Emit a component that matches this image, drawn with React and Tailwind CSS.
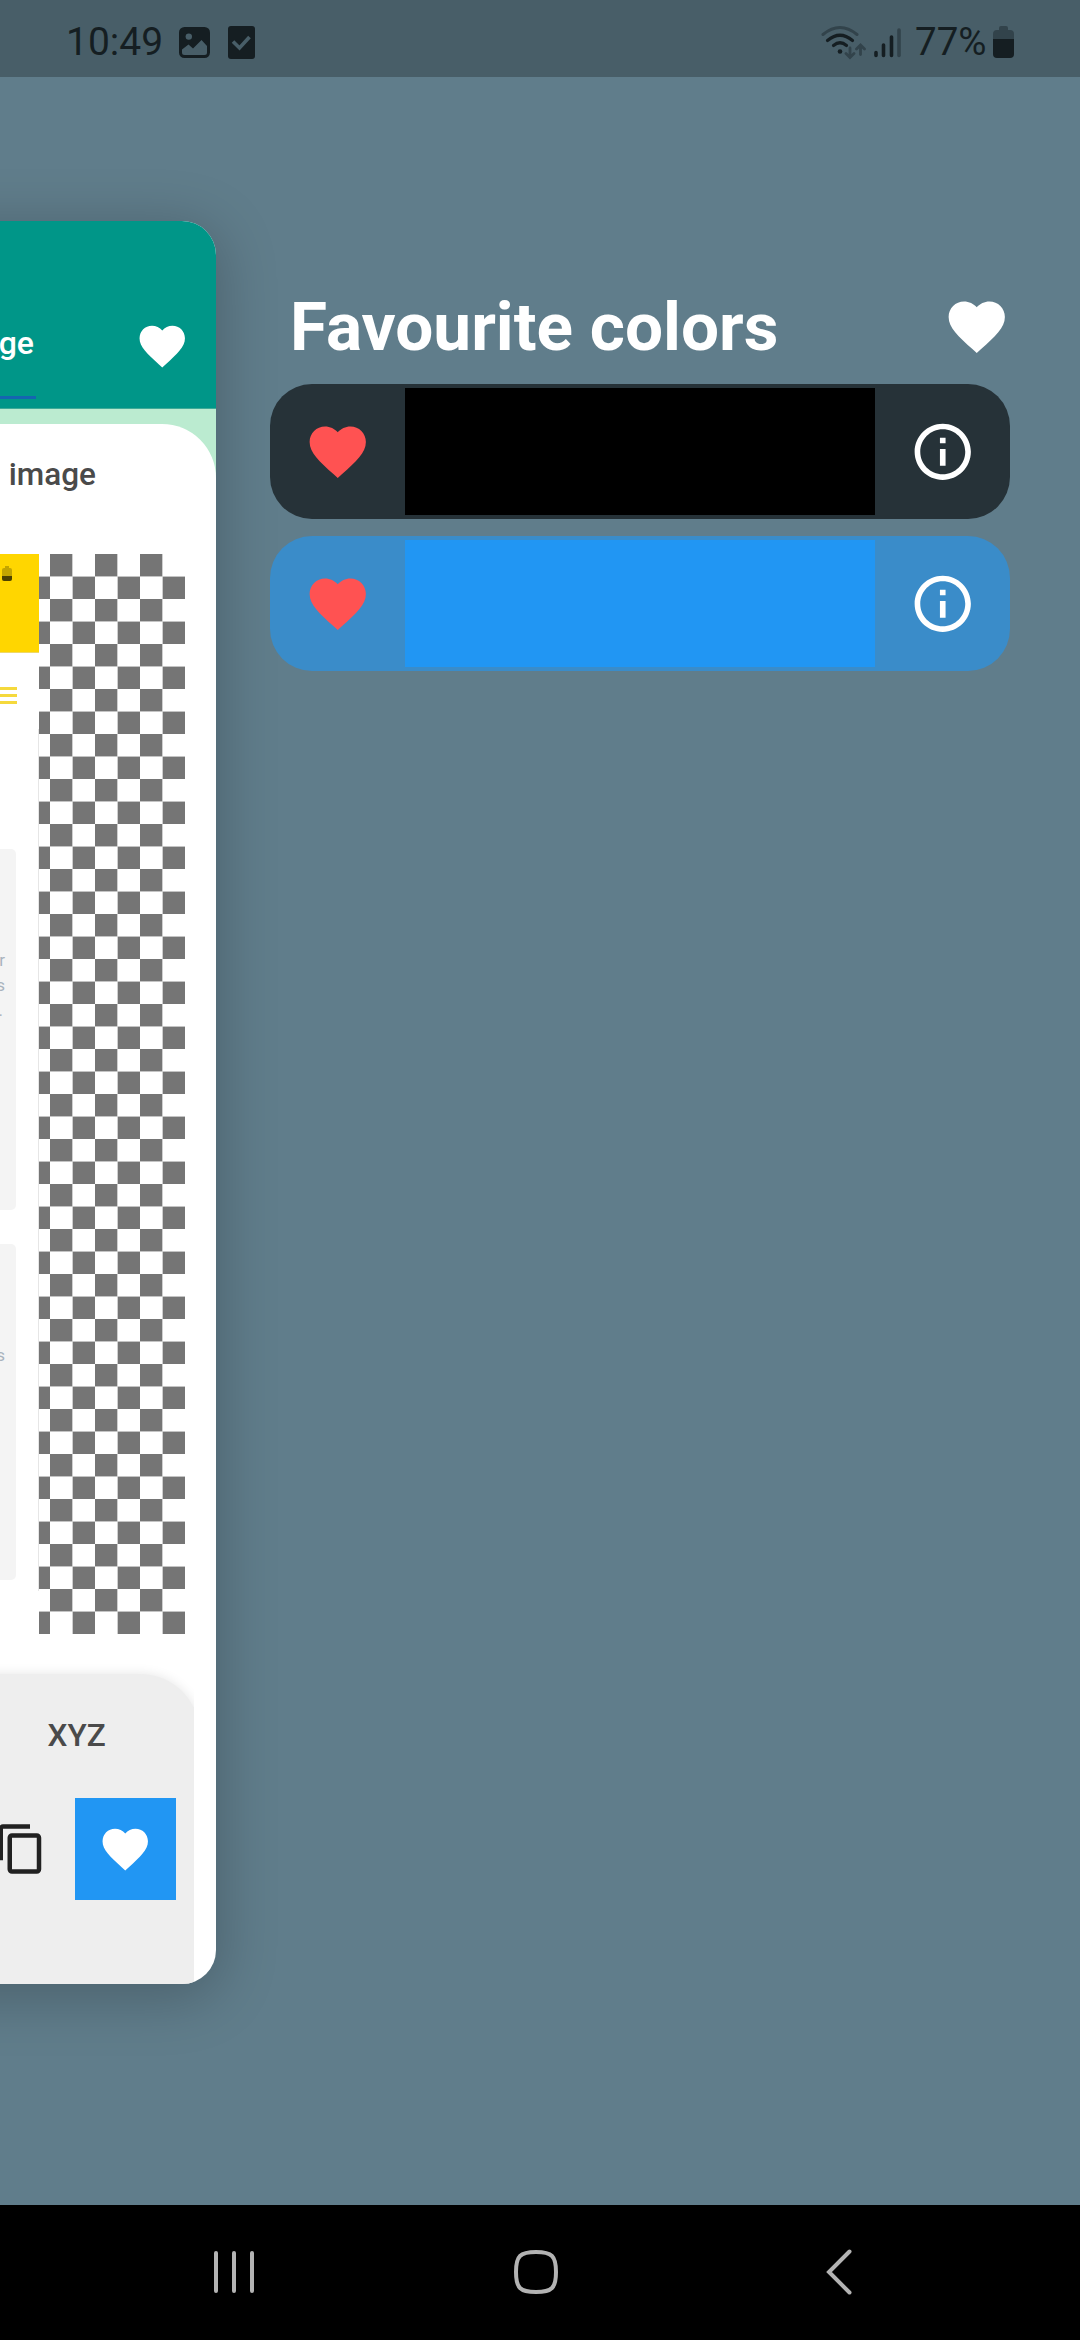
import React from "react";

const HEART =
  "M12 21.35l-1.45-1.32C5.4 15.36 2 12.28 2 8.5 2 5.42 4.42 3 7.5 3c1.74 0 3.41.81 4.5 2.09C13.09 3.81 14.76 3 16.5 3 19.58 3 22 5.42 22 8.5c0 3.78-3.4 6.86-8.55 11.54L12 21.35z";
const INFO =
  "M11 7h2v2h-2zm0 4h2v6h-2zm1-9C6.48 2 2 6.48 2 12s4.48 10 10 10 10-4.48 10-10S17.52 2 12 2zm0 18c-4.41 0-8-3.59-8-8s3.59-8 8-8 8 3.59 8 8-3.59 8-8 8z";
const COPY =
  "M16 1H4c-1.1 0-2 .9-2 2v14h2V3h12V1zm3 4H8c-1.1 0-2 .9-2 2v14c0 1.1.9 2 2 2h11c1.1 0 2-.9 2-2V7c0-1.1-.9-2-2-2zm0 16H8V7h11v14z";

function Icon({ d, className }) {
  return (
    <svg viewBox="0 0 24 24" fill="currentColor" className={"shrink-0 " + className}>
      <path d={d} />
    </svg>
  );
}

function StatusBar() {
  return (
    <header className="flex h-[77px] shrink-0 items-start bg-[#485e68] text-[#151e22]">
      <span className="ml-[66px] mt-[19px] w-[113px] text-[39px] leading-[46px]">10:49</span>
      <svg className="mt-[27px] h-[31px] w-[31px]" viewBox="0 0 31 31">
        <rect width="31" height="31" rx="5.5" fill="currentColor" />
        <circle cx="9.8" cy="9.6" r="3.2" fill="#485e68" />
        <path d="M3 22.5l6.500-5 4.500 4 8.500-8.500 5.500 6v6.500a2.500 2.500 0 0 1-2.500 2.500h-20a2.500 2.500 0 0 1-2.500-2.500z" fill="#485e68" />
      </svg>
      <svg className="ml-[18px] mt-[26px] h-[33px] w-[27px]" viewBox="0 0 27 33">
        <rect width="27" height="33" rx="3" fill="currentColor" />
        <path d="M5 15.500l6.500 6.500L21.500 11" fill="none" stroke="#485e68" strokeWidth="3.600" />
      </svg>
      <svg className="ml-auto mt-[25px] h-[35px] w-[46px]" viewBox="0 0 46 35" fill="none" strokeLinecap="round">
        <path d="M3 9.500Q20 -4.500 37 9.500" stroke="#32434b" strokeWidth="3" />
        <path d="M7.500 15.500Q20 5 32.500 15.500M13.500 20.500Q20 15 26.500 20.500" stroke="currentColor" strokeWidth="3.200" />
        <circle cx="20" cy="26.500" r="2.300" fill="currentColor" />
        <path d="M30 23v9M26 28.500l4 4 4-4M40.500 29.500v-9M36.500 24l4-4 4 4" stroke="#32434b" strokeWidth="2.800" />
      </svg>
      <svg className="ml-[7px] mt-[28px] h-[30px] w-[28px]" viewBox="0 0 28 30" fill="none" strokeWidth="3.600" strokeLinecap="round">
        <path d="M3 24.500v3M10.500 17v10.500M18.500 9v18.500" stroke="currentColor" />
        <path d="M26 2v25.500" stroke="#32434b" />
      </svg>
      <span className="ml-[14px] mt-[19px] w-[78px] text-[38.5px] leading-[46px]">77%</span>
      <svg className="mr-[66px] mt-[26px] h-[32px] w-[21px]" viewBox="0 0 21 32">
        <path d="M0 13V8a4 4 0 0 1 4-4h2V2a2 2 0 0 1 2-2h5a2 2 0 0 1 2 2v2h2a4 4 0 0 1 4 4v5z" fill="#32434b" />
        <path d="M0 13h21v15a4 4 0 0 1-4 4H4a4 4 0 0 1-4-4z" fill="currentColor" />
      </svg>
    </header>
  );
}

function PickedImage() {
  return (
    <div className="flex h-[1080px]">
      <div className="flex w-[39px] flex-col overflow-hidden bg-[linear-gradient(#e6e6e6,#e6e6e6)] bg-[length:1px_862px] bg-[position:38px_175px] bg-no-repeat text-[17px] leading-[25px] text-[#a9b3bd]">
        <div className="h-[99px] shrink-0 border-b border-[#eed868] bg-[#ffd600] pl-[2px] pt-[12px]">
          <svg className="h-[15px] w-[10px]" viewBox="0 0 10 15">
            <path d="M0 10V4q0-2 2-2h1V0h4v2h1q2 0 2 2v6z" fill="#c4a500" />
            <path d="M0 10h10v3q0 2-2 2H2q-2 0-2-2z" fill="#4d4100" />
          </svg>
        </div>
        <div className="mt-[34px] flex w-[17px] flex-col gap-[4px]">
          <div className="h-[3px] bg-[#f5d93c]" />
          <div className="h-[3px] bg-[#f5d93c]" />
          <div className="h-[3px] bg-[#f5d93c]" />
        </div>
        <div className="mt-[145px] flex h-[361px] w-[16px] shrink-0 flex-col items-end rounded-r-[5px] bg-[#f4f4f4] pr-[11px] pt-[99px]">
          <span>r</span>
          <span>s</span>
          <span className="pr-[2px]">.</span>
        </div>
        <div className="mt-[34px] flex h-[336px] w-[16px] shrink-0 flex-col items-end rounded-r-[5px] bg-[#f4f4f4] pr-[11px] pt-[99px]">
          <span>s</span>
        </div>
      </div>
      <div className="h-full w-[146px] bg-[linear-gradient(to_right,transparent_22px,#cfcfcf_22px,#cfcfcf_23px,transparent_23px),linear-gradient(to_bottom,transparent_22px,#c4c4c4_22px,#c4c4c4_23px,transparent_23px),conic-gradient(#fff_25%,#757575_25%,#757575_50%,#fff_50%,#fff_75%,#757575_75%)] bg-[length:45px_45px] bg-[position:11px_0px]" />
    </div>
  );
}

function PageCard() {
  return (
    <section className="-ml-[200px] mt-[144px] flex h-[1763px] w-[416px] shrink-0 flex-col overflow-hidden rounded-[34px] bg-white pl-[200px] shadow-[0_10px_56px_6px_rgba(0,0,0,0.21)]">
      <div className="-ml-[200px] flex h-[188px] shrink-0 border-b border-[#3faa98] bg-[#009688] pl-[200px] text-white">
        <div className="flex w-[36px] flex-col items-end">
          <span className="mt-[102px] pr-[2px] text-[32px] font-medium leading-[40px]">ge</span>
          <span className="mt-[33px] h-[3px] w-full bg-[#1565b0]" />
        </div>
        <Icon d={HEART} className="ml-[99px] mt-[97.5px] size-[54.5px]" />
      </div>
      <div className="-ml-[200px] shrink-0 bg-[#bbebd0] pl-[200px] pt-[15px]">
        <div className="-ml-[200px] flex h-[130px] rounded-tr-[54px] bg-white pl-[200px]">
          <div className="flex w-[96px] justify-end whitespace-nowrap pt-[31px] text-[31.5px] font-medium leading-[40px] text-[#4a4a4a]">
            image
          </div>
        </div>
      </div>
      <PickedImage />
      <div className="-ml-[200px] mt-[20px] flex h-[330px] w-[394px] shrink-0 overflow-hidden pt-[20px]">
        <div className="flex h-[310px] w-[400px] shrink-0 flex-col rounded-tr-[60px] bg-[#eeeeee] pl-[200px] shadow-[0_0_12px_rgba(0,0,0,0.1)]">
          <span className="ml-[47.5px] mt-[42px] text-[31.5px] font-medium leading-[40px] text-[#4a4a4a]">XYZ</span>
          <div className="mt-[42px] flex items-center">
            <Icon d={COPY} className="-ml-[6px] size-[54px] text-[#212121]" />
            <div className="ml-[26.5px] flex h-[102px] w-[101.5px] items-center justify-center bg-[#2196f3] text-white">
              <Icon d={HEART} className="size-[54.5px]" />
            </div>
          </div>
        </div>
      </div>
    </section>
  );
}

function ColorRow({ rowClass, swatchClass }) {
  return (
    <li className={"flex h-[135px] items-center rounded-[42px] " + rowClass}>
      <div className="flex w-[135px] justify-center">
        <Icon d={HEART} className="size-[67.5px] text-[#ff5252]" />
      </div>
      <div className={"h-[127px] flex-1 " + swatchClass} />
      <div className="flex w-[135px] justify-center">
        <Icon d={INFO} className="size-[67.5px] text-white" />
      </div>
    </li>
  );
}

function NavBar() {
  return (
    <nav className="flex h-[135px] shrink-0 items-center bg-black pb-px text-[#b3b3b3]">
      <svg className="ml-[212px] h-[48px] w-[44px]" viewBox="0 0 44 48" fill="none" stroke="currentColor" strokeWidth="4" strokeLinecap="round">
        <path d="M4 5v38M22 5v38M40 5v38" />
      </svg>
      <svg className="ml-[256px] h-[48px] w-[48px]" viewBox="0 0 48 48" fill="none" stroke="currentColor" strokeWidth="4">
        <path d="M24 4C40 4 44 8 44 24S40 44 24 44 4 40 4 24 8 4 24 4z" />
      </svg>
      <svg className="ml-[264px] h-[48px] w-[32px]" viewBox="0 0 32 48" fill="none" stroke="currentColor" strokeWidth="4" strokeLinecap="round">
        <path d="M25.500 3.500L5 24l20.500 20.500" />
      </svg>
    </nav>
  );
}

export default function App() {
  return (
    <div className="flex h-[2340px] w-[1080px] flex-col overflow-hidden bg-[#607d8b] font-['Roboto',sans-serif]">
      <StatusBar />
      <main className="flex flex-1 items-start">
        <PageCard />
        <section className="ml-[54px] w-[740px] pt-[205px]">
          <div className="flex h-[90px] items-center pl-[20px]">
            <h1 className="text-[67.5px] font-bold leading-[80px] text-white">Favourite colors</h1>
            <Icon d={HEART} className="ml-auto size-[67.5px] text-white" />
          </div>
          <ul className="mt-[12px] flex flex-col gap-[17px]">
            <ColorRow rowClass="bg-[#263238]" swatchClass="bg-black" />
            <ColorRow rowClass="bg-[#3a8cc9]" swatchClass="bg-[#2196f3]" />
          </ul>
        </section>
      </main>
      <NavBar />
    </div>
  );
}
